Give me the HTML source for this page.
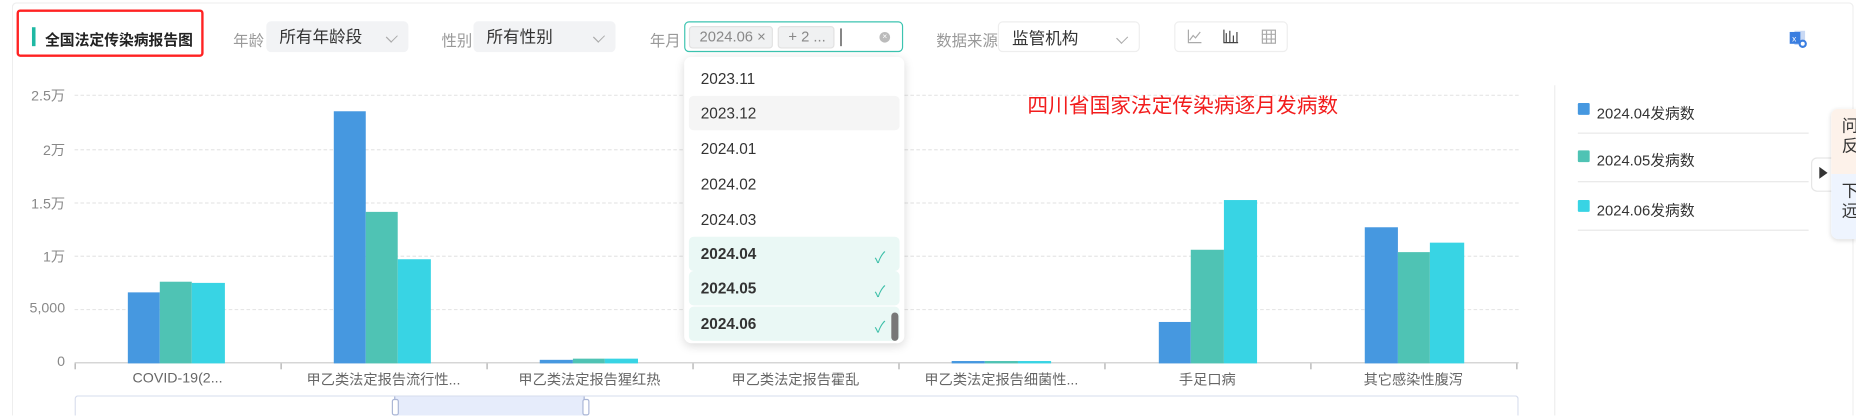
<!DOCTYPE html>
<html><head><meta charset="utf-8"><style>
html,body{margin:0;padding:0;width:1856px;height:416px;overflow:hidden;background:#fff}
#w{position:absolute;left:0;top:0;width:1568px;height:351px;overflow:hidden;transform:scale(1.18367);transform-origin:0 0;font-family:"Liberation Sans","Noto Sans CJK SC",sans-serif;color:#333}
.a{position:absolute}
.lab{position:absolute;font-size:13px;color:#999;top:24px}
.sel{position:absolute;top:18px;height:26px;width:120px;background:#f2f3f5;border-radius:4px;font-size:14px;line-height:26px;box-sizing:border-box;padding-left:11px}
.chev{position:absolute;right:10px;top:9px;width:7px;height:7px;border-right:1px solid #aaa;border-bottom:1px solid #aaa;transform:rotate(45deg) scaleX(.8)}
.yl{position:absolute;right:1513px;font-size:12px;color:#888;width:60px;text-align:right}
.gl{position:absolute;left:63px;width:1220px;border-top:1px dashed #e6e6e6;height:0}
.bar{position:absolute;bottom:44px}
.xl{position:absolute;top:312px;font-size:12px;color:#666;width:170px;text-align:center}
.tk{position:absolute;top:307px;width:1px;height:5px;background:#aaa}
.it{position:absolute;left:582px;width:178px;height:29px;font-size:13px;line-height:29px;padding-left:10px;box-sizing:border-box;border-radius:4px}
.sq{position:absolute;left:1333px;width:10px;height:10px;border-radius:1px}
.lt{position:absolute;left:1349px;font-size:12.5px;color:#333}
.ln{position:absolute;left:1333px;width:195px;height:1px;background:#e8e8e8}
.ck{position:absolute;left:739px;font-size:13px;color:#3cbfa8}
</style></head><body><div id="w">
<div class="a" style="left:10px;top:2px;width:1556px;height:349px;border:1px solid #eee;border-bottom:none;border-radius:4px 4px 0 0;box-sizing:border-box"></div>
<div class="a" style="left:14px;top:8px;width:154px;height:36px;border:2px solid #f22;border-radius:3px"></div>
<div class="a" style="left:27px;top:23px;width:3px;height:16px;background:#1fb8a3"></div>
<div class="a" style="left:38px;top:23px;font-size:12.5px;font-weight:bold;color:#222">全国法定传染病报告图</div>
<div class="lab" style="left:197px">年龄</div>
<div class="sel" style="left:225px">所有年龄段<div class="chev"></div></div>
<div class="lab" style="left:373px">性别</div>
<div class="sel" style="left:400px">所有性别<div class="chev"></div></div>
<div class="lab" style="left:549px">年月</div>
<div class="a" style="left:578px;top:18px;width:185px;height:26px;border:1px solid #3cc4b0;border-radius:4px;box-sizing:border-box"></div>
<div class="a" style="left:582px;top:22px;width:71px;height:19px;background:#f0f1f2;border:1px solid #e2e2e2;border-radius:3px;box-sizing:border-box;font-size:12.5px;color:#888;line-height:17px;padding-left:8px">2024.06 ×</div>
<div class="a" style="left:657px;top:22px;width:48px;height:19px;background:#f0f1f2;border:1px solid #e2e2e2;border-radius:3px;box-sizing:border-box;font-size:12.5px;color:#888;line-height:17px;padding-left:8px">+ 2 ...</div>
<div class="a" style="left:710px;top:24px;width:1px;height:15px;background:#333"></div>
<div class="a" style="left:743px;top:27px;width:9px;height:9px;border-radius:50%;background:#bbb;color:#fff;font-size:7px;line-height:9px;text-align:center">×</div>
<div class="lab" style="left:791px">数据来源</div>
<div class="sel" style="left:843px;background:#fff;border:1px solid #eee">监管机构<div class="chev"></div></div>
<div class="a" style="left:992px;top:18px;width:96px;height:26px;border:1px solid #eee;border-radius:4px;box-sizing:border-box"></div>
<svg class="a" style="left:1002px;top:24px" width="80" height="14"><path d="M2 1V12H13M3 10l3-4 2 2 4-5" stroke="#aaa" fill="none"/><path d="M32 1v11h12M34 4v8M37 2v10M40 6v6M43 3v9" stroke="#444" fill="none"/><rect x="64.5" y="1.5" width="11" height="11" stroke="#aaa" fill="none"/><path d="M64 5h12M64 9h12M68 2v11M72 2v11" stroke="#aaa"/></svg>
<svg class="a" style="left:1511px;top:25px" width="18" height="17"><rect x="5" y="1" width="9" height="12" fill="#c9d9f4"/><rect x="1" y="2" width="9" height="10" fill="#3a7ee0"/><text x="3" y="10" font-size="7" fill="#fff" font-family="Liberation Sans">x</text><circle cx="12" cy="12" r="3.5" fill="#3a7ee0"/><circle cx="12" cy="12" r="1.7" fill="#fff"/></svg>
<div class="yl" style="top:72px">2.5万</div>
<div class="yl" style="top:118px">2万</div>
<div class="yl" style="top:163px">1.5万</div>
<div class="yl" style="top:208px">1万</div>
<div class="yl" style="top:253px">5,000</div>
<div class="yl" style="top:298px">0</div>
<div class="gl" style="top:80px"></div><div class="gl" style="top:126px"></div><div class="gl" style="top:171px"></div><div class="gl" style="top:216px"></div><div class="gl" style="top:261px"></div>
<div class="a" style="left:63px;top:306px;width:1220px;height:1px;background:#ccc"></div>
<div class="tk" style="left:63px"></div><div class="tk" style="left:237px"></div><div class="tk" style="left:411px"></div><div class="tk" style="left:585px"></div><div class="tk" style="left:759px"></div><div class="tk" style="left:933px"></div><div class="tk" style="left:1107px"></div><div class="tk" style="left:1281px"></div>
<div class="bar" style="left:108px;width:27px;top:247px;background:#4698e0"></div>
<div class="bar" style="left:135px;width:27px;top:238px;background:#4fc3b4"></div>
<div class="bar" style="left:162px;width:28px;top:239px;background:#38d4e4"></div>
<div class="bar" style="left:282px;width:27px;top:94px;background:#4698e0"></div>
<div class="bar" style="left:309px;width:27px;top:179px;background:#4fc3b4"></div>
<div class="bar" style="left:336px;width:28px;top:219px;background:#38d4e4"></div>
<div class="bar" style="left:456px;width:28px;top:304px;background:#4698e0"></div>
<div class="bar" style="left:484px;width:27px;top:303px;background:#4fc3b4"></div>
<div class="bar" style="left:511px;width:28px;top:303px;background:#38d4e4"></div>
<div class="bar" style="left:804px;width:28px;top:305px;background:#4698e0"></div>
<div class="bar" style="left:832px;width:28px;top:305px;background:#4fc3b4"></div>
<div class="bar" style="left:860px;width:28px;top:305px;background:#38d4e4"></div>
<div class="bar" style="left:979px;width:27px;top:272px;background:#4698e0"></div>
<div class="bar" style="left:1006px;width:28px;top:211px;background:#4fc3b4"></div>
<div class="bar" style="left:1034px;width:28px;top:169px;background:#38d4e4"></div>
<div class="bar" style="left:1153px;width:28px;top:192px;background:#4698e0"></div>
<div class="bar" style="left:1181px;width:27px;top:213px;background:#4fc3b4"></div>
<div class="bar" style="left:1208px;width:29px;top:205px;background:#38d4e4"></div>
<div class="xl" style="left:65px">COVID-19(2...</div>
<div class="xl" style="left:239px">甲乙类法定报告流行性...</div>
<div class="xl" style="left:413px">甲乙类法定报告猩红热</div>
<div class="xl" style="left:587px">甲乙类法定报告霍乱</div>
<div class="xl" style="left:761px">甲乙类法定报告细菌性...</div>
<div class="xl" style="left:935px">手足口病</div>
<div class="xl" style="left:1109px">其它感染性腹泻</div>
<div class="a" style="left:63px;top:334px;width:1220px;height:17px;border:1px solid #d6dcec;border-bottom:none;border-radius:3px 3px 0 0;box-sizing:border-box"></div>
<div class="a" style="left:333px;top:335px;width:161px;height:16px;background:#e6ecfb;border-left:1px solid #aab6d6;border-right:1px solid #aab6d6;box-sizing:border-box"></div>
<div class="a" style="left:331px;top:337px;width:4px;height:12px;background:#fff;border:1px solid #aab6d6;border-radius:2px"></div>
<div class="a" style="left:492px;top:337px;width:4px;height:12px;background:#fff;border:1px solid #aab6d6;border-radius:2px"></div>
<div class="a" style="left:868px;top:76px;font-size:17.5px;color:#f21c1c">四川省国家法定传染病逐月发病数</div>
<div class="a" style="left:1313px;top:72px;width:1px;height:279px;background:#eee"></div>
<div class="sq" style="top:87px;background:#4698e0"></div><div class="lt" style="top:85px">2024.04发病数</div>
<div class="ln" style="top:112px"></div>
<div class="sq" style="top:127px;background:#4fc3b4"></div><div class="lt" style="top:125px">2024.05发病数</div>
<div class="ln" style="top:153px"></div>
<div class="sq" style="top:169px;background:#38d4e4"></div><div class="lt" style="top:167px">2024.06发病数</div>
<div class="ln" style="top:194px"></div>
<div class="a" style="left:1530px;top:133px;width:22px;height:27px;background:#fff;border:1px solid #e6e6e6;border-radius:5px"></div>
<div class="a" style="left:1537px;top:141px;width:0;height:0;border-left:7px solid #333;border-top:5px solid transparent;border-bottom:5px solid transparent"></div>
<div class="a" style="left:1547px;top:92px;width:21px;height:110px;border-radius:6px 0 0 6px;box-shadow:0 1px 4px rgba(0,0,0,.15);overflow:hidden">
<div style="height:55px;background:#fdf2ea;font-size:14px;padding:6px 0 0 9px;box-sizing:border-box;line-height:17px;white-space:nowrap">问<br>反</div>
<div style="height:55px;background:#eef4fe;font-size:14px;padding:6px 0 0 9px;box-sizing:border-box;line-height:17px;white-space:nowrap">下<br>远</div></div>
<div class="a" style="left:578px;top:48px;width:186px;height:242px;background:#fff;border-radius:6px;box-shadow:0 2px 8px rgba(0,0,0,.15)"></div>
<div class="it" style="top:52px">2023.11</div>
<div class="it" style="top:81px;background:#f5f5f5">2023.12</div>
<div class="it" style="top:111px">2024.01</div>
<div class="it" style="top:141px">2024.02</div>
<div class="it" style="top:171px">2024.03</div>
<div class="it" style="top:200px;background:#eaf8f5;font-weight:bold">2024.04</div><div class="ck" style="top:207px">✓</div>
<div class="it" style="top:229px;background:#eaf8f5;font-weight:bold">2024.05</div><div class="ck" style="top:236px">✓</div>
<div class="it" style="top:259px;background:#eaf8f5;font-weight:bold">2024.06</div><div class="ck" style="top:266px">✓</div>
<div class="a" style="left:753px;top:264px;width:6px;height:24px;background:#777;border-radius:3px"></div>
</div></body></html>
